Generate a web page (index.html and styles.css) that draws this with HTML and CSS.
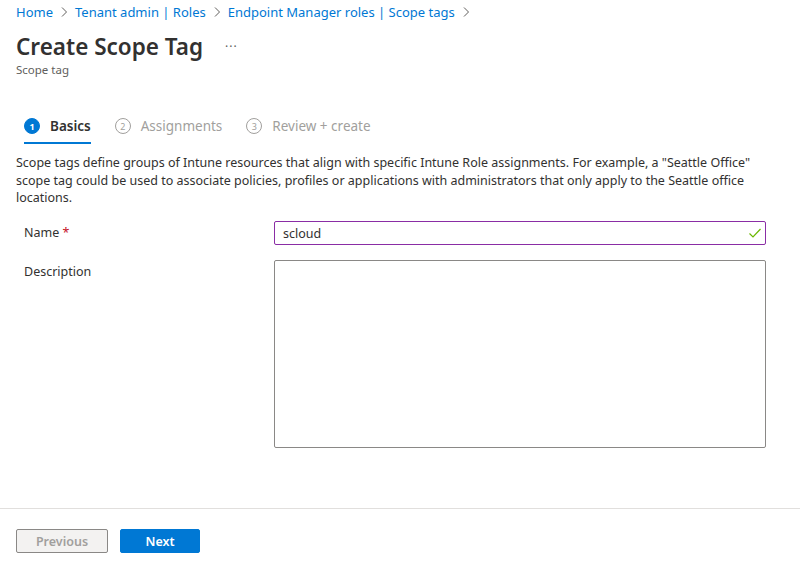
FILE: index.html
```html
<!DOCTYPE html>
<html lang="en">
<head>
    <title>Create Scope Tag</title>
    <link rel="stylesheet" href="styles.css">
</head>
<body>
<div class="page">
    <div class="breadcrumb">
        <a href="#">Home</a>
        <svg class="chev" width="8" height="12" viewBox="0 0 8 12"><path d="M2 1.5 L6.5 6 L2 10.5" fill="none" stroke="#605e5c" stroke-width="1"/></svg>
        <a href="#">Tenant admin | Roles</a>
        <svg class="chev" width="8" height="12" viewBox="0 0 8 12"><path d="M2 1.5 L6.5 6 L2 10.5" fill="none" stroke="#605e5c" stroke-width="1"/></svg>
        <a href="#">Endpoint Manager roles | Scope tags</a>
        <svg class="chev" width="8" height="12" viewBox="0 0 8 12"><path d="M2 1.5 L6.5 6 L2 10.5" fill="none" stroke="#605e5c" stroke-width="1"/></svg>
    </div>
    <div class="titleRow">
        <h1>Create Scope Tag</h1>
        <span class="more">···</span>
    </div>
    <div class="subtitle">Scope tag</div>

    <div class="tabs">
        <div class="tab active"><span class="step">1</span>Basics</div>
        <div class="tab"><span class="step">2</span>Assignments</div>
        <div class="tab"><span class="step">3</span>Review + create</div>
    </div>

    <p class="intro">Scope tags define groups of Intune resources that align with specific Intune Role assignments. For example, a "Seattle Office" scope tag could be used to associate policies, profiles or applications with administrators that only apply to the Seattle office locations.</p>

    <div class="field">
        <label for="name">Name <span class="req">*</span></label>
        <div class="inputWrap">
            <input type="text" id="name" value="scloud">
            <svg class="check" width="14" height="14" viewBox="0 0 14 14"><path d="M1.5 7.5 L5 11 L12.5 3" fill="none" stroke="#6bb700" stroke-width="1.2"/></svg>
        </div>
    </div>
    <div class="field">
        <label for="desc">Description</label>
        <textarea id="desc"></textarea>
    </div>
</div>

<div class="footer">
    <button class="btn prev" disabled>Previous</button>
    <button class="btn next">Next</button>
</div>
</body>
</html>
```

FILE: styles.css
```css
body {
    margin: 0;
    font-family: "Noto Sans", "Open Sans", sans-serif;
    color: #323130;
    background: #ffffff;
    height: 573px;
    display: flex;
    flex-direction: column;
    overflow: hidden;
}

.page {
    flex: 1;
    padding: 2px 16px 0 16px;
}

.breadcrumb {
    font-size: 13px;
    line-height: 20px;
    display: flex;
    align-items: center;
}

.breadcrumb a {
    color: #0078d4;
    text-decoration: none;
}

.chev {
    margin: 0 7px;
}

.titleRow {
    display: flex;
    align-items: center;
    margin-top: 9px;
    height: 30px;
}

h1 {
    margin: 0;
    font-size: 22.5px;
    font-weight: 600;
    color: #323130;
}

.more {
    margin-left: 22px;
    color: #605e5c;
    font-size: 12px;
    letter-spacing: 1px;
}

.subtitle {
    font-size: 11.5px;
    color: #605e5c;
    margin-top: 1px;
}

.tabs {
    display: flex;
    gap: 24px;
    margin-top: 36px;
    padding-left: 8px;
}

.tab {
    display: flex;
    align-items: center;
    gap: 10px;
    font-size: 13.5px;
    color: #a19f9d;
    height: 26px;
    border-bottom: 2px solid transparent;
    padding-bottom: 3px;
}

.tab.active {
    color: #323130;
    font-weight: 600;
    border-bottom-color: #0078d4;
}

.step {
    width: 14px;
    height: 14px;
    border: 1px solid #a19f9d;
    border-radius: 50%;
    font-size: 9px;
    font-weight: 400;
    display: flex;
    align-items: center;
    justify-content: center;
    color: #a19f9d;
}

.tab.active .step {
    background: #0078d4;
    border-color: #0078d4;
    color: #ffffff;
    font-weight: 700;
}

.intro {
    font-size: 12.5px;
    line-height: 17.5px;
    margin: 10px 0 14px 0;
    color: #323130;
    max-width: 750px;
}

.field {
    display: flex;
    margin-bottom: 15px;
}

.field label {
    width: 250px;
    padding-left: 8px;
    font-size: 12.5px;
    line-height: 24px;
}

.req {
    color: #c50f1f;
}

.inputWrap {
    position: relative;
    width: 492px;
}

input[type="text"] {
    width: 100%;
    height: 24px;
    box-sizing: border-box;
    border: 1px solid #8a2da5;
    border-radius: 2px;
    padding: 0 8px;
    font-family: inherit;
    font-size: 12.5px;
    color: #323130;
    outline: none;
}

.check {
    position: absolute;
    right: 4px;
    top: 5px;
}

textarea {
    width: 492px;
    height: 188px;
    box-sizing: border-box;
    border: 1px solid #8a8886;
    border-radius: 2px;
    resize: none;
    font-family: inherit;
    margin: 0;
}

.footer {
    border-top: 1px solid #e1dfdd;
    height: 65px;
    display: flex;
    align-items: flex-start;
    gap: 12px;
    padding: 20px 16px 0 16px;
    box-sizing: border-box;
}

.btn {
    height: 24px;
    border-radius: 2px;
    font-family: inherit;
    font-size: 12.5px;
    font-weight: 600;
    cursor: pointer;
}

.btn.prev {
    width: 92px;
    background: #f3f2f1;
    border: 1px solid #8a8886;
    color: #a19f9d;
}

.btn.next {
    width: 80px;
    background: #0078d4;
    border: 1px solid #0078d4;
    color: #ffffff;
}
```
